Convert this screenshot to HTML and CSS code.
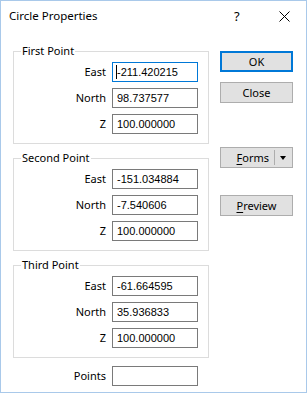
FILE: index.html
```html
<!DOCTYPE html>
<html>
<head>
<meta charset="utf-8">
<link rel="stylesheet" href="styles.css">
</head>
<body>
<div class="window">
  <div class="titlebar">
    <span class="title">Circle Properties</span>
    <span class="help">?</span>
    <span class="close-x"><svg width="11" height="11" viewBox="0 0 11 11"><path d="M0.5 0.5 L10.5 10.5 M10.5 0.5 L0.5 10.5" stroke="#000" stroke-width="1" fill="none"/></svg></span>
  </div>
  <div class="body">
    <div class="left">
      <fieldset class="group g1">
        <legend>First Point</legend>
        <div class="row"><label>East</label><div class="field focus"><span class="caret"></span>-211.420215</div></div>
        <div class="row"><label>North</label><div class="field">98.737577</div></div>
        <div class="row"><label>Z</label><div class="field">100.000000</div></div>
      </fieldset>
      <fieldset class="group g2">
        <legend>Second Point</legend>
        <div class="row"><label>East</label><div class="field">-151.034884</div></div>
        <div class="row"><label>North</label><div class="field">-7.540606</div></div>
        <div class="row"><label>Z</label><div class="field">100.000000</div></div>
      </fieldset>
      <fieldset class="group g3">
        <legend>Third Point</legend>
        <div class="row"><label>East</label><div class="field">-61.664595</div></div>
        <div class="row"><label>North</label><div class="field">35.936833</div></div>
        <div class="row"><label>Z</label><div class="field">100.000000</div></div>
      </fieldset>
      <div class="row points"><label>Points</label><div class="field"></div></div>
    </div>
    <div class="right">
      <div class="btn default">OK</div>
      <div class="btn close">Close</div>
      <div class="btn forms"><span class="forms-label"><u>F</u>orms</span><span class="sep"></span><span class="arrow"></span></div>
      <div class="btn preview"><u>P</u>review</div>
    </div>
  </div>
</div>
</body>
</html>
```
FILE: styles.css
```css
html, body {
  margin: 0;
  padding: 0;
  background: #ffffff;
}
.window {
  width: 307px;
  height: 393px;
  box-sizing: border-box;
  border: 1px solid #a9c9ea;
  background: #ffffff;
  font-family: "Noto Sans", sans-serif;
  font-size: 11px;
  color: #000;
  display: flex;
  flex-direction: column;
}
.titlebar {
  height: 30px;
  display: flex;
  align-items: center;
  padding-left: 8px;
}
.title {
  flex: 1;
  font-size: 11.5px;
  margin-top: -1px;
}
.help {
  width: 12px;
  margin-right: 33px;
  font-size: 13px;
}
.close-x {
  width: 11px;
  height: 11px;
  margin-right: 16px;
  display: flex;
}
.body {
  display: flex;
  padding-left: 12px;
  padding-top: 13px;
}
.left {
  width: 196px;
  display: flex;
  flex-direction: column;
}
.group {
  margin: 0;
  padding: 4px 10px 9px 0;
  border: 1px solid #dcdcdc;
  min-width: 0;
  display: flex;
  flex-direction: column;
  gap: 6px;
}
.group legend {
  margin-left: 7px;
  padding: 0 1px;
  line-height: 14px;
  height: 14px;
}
.g2, .g3 { margin-top: 7px; }
.row {
  display: flex;
  justify-content: flex-end;
  align-items: center;
  height: 20px;
}
.row label {
  margin-right: 6px;
  line-height: 14px;
}
.field {
  width: 86px;
  height: 20px;
  box-sizing: border-box;
  border: 1px solid #7a7a7a;
  background: #fff;
  font-family: "Liberation Sans", Arial, sans-serif;
  font-size: 11px;
  line-height: 18px;
  padding-left: 4px;
  display: flex;
  align-items: center;
  white-space: nowrap;
}
.field.focus {
  border-color: #0078d7;
}
.caret {
  width: 1px;
  height: 14px;
  background: #000;
  margin-left: -1px;
}
.points {
  margin-top: 8px;
  padding-right: 11px;
}
.right {
  margin-left: 11px;
  padding-top: 7px;
  display: flex;
  flex-direction: column;
}
.btn {
  width: 73px;
  height: 21px;
  box-sizing: border-box;
  border: 1px solid #adadad;
  background: #e1e1e1;
  display: flex;
  align-items: center;
  justify-content: center;
  line-height: 14px;
}
.btn.default {
  border: 2px solid #0078d7;
}
.btn.close { margin-top: 10px; }
.btn.forms {
  margin-top: 44px;
  justify-content: flex-end;
  padding-right: 6px;
}
.forms-label { margin-right: 5px; }
.sep {
  width: 1px;
  height: 15px;
  background: #adadad;
  margin-right: 5px;
}
.arrow {
  width: 0;
  height: 0;
  border-left: 3.5px solid transparent;
  border-right: 3.5px solid transparent;
  border-top: 4px solid #000;
}
.btn.preview { margin-top: 27px; }
u { text-decoration-thickness: 1px; text-underline-offset: 2px; }
```
